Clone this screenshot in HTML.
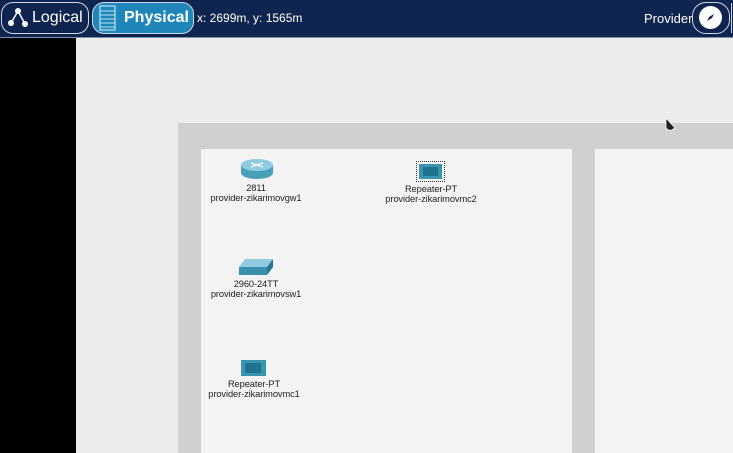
<!DOCTYPE html>
<html><head><style>
body{margin:0;width:733px;height:453px;overflow:hidden;background:#ececec;font-family:"Liberation Sans",sans-serif;position:relative}
.bar{position:absolute;left:0;top:0;width:733px;height:37px;background:#0f2550;border-bottom:1px solid #8090a8}
.tab{position:absolute;top:2px;height:32px;border:1.5px solid #cfd8e4;border-radius:12px;box-sizing:border-box;color:#fff;font-size:16px;line-height:30px}
.lbl{position:absolute;font-size:9.3px;color:#222;text-align:center;width:140px;line-height:10px;letter-spacing:-0.1px}
</style></head><body>
<div class="bar">
 <div class="tab" style="left:1px;width:88px;background:#0f2550">
  <svg width="26" height="26" style="position:absolute;left:3px;top:2px"><path d="M13 6 L6 18 M13 6 L20 19" stroke="#fff" stroke-width="1.5"/><circle cx="13" cy="6" r="3" fill="#fff"/><circle cx="6" cy="18" r="3" fill="#fff"/><circle cx="20" cy="19" r="3" fill="#fff"/></svg>
  <span style="position:absolute;left:30px;top:0">Logical</span></div>
 <div class="tab" style="left:92px;width:102px;background:#1e86b8;font-weight:bold">
  <svg width="20" height="26" style="position:absolute;left:5px;top:2px"><rect x="2" y="1" width="15" height="24" fill="none" stroke="#bfe0f0" stroke-width="1.2"/><path d="M2 6H17M2 10H17M2 14H17M2 18H17M2 22H17" stroke="#bfe0f0"/></svg>
  <span style="position:absolute;left:31px;top:0">Physical</span></div>
 <div style="position:absolute;left:197px;top:11px;color:#fff;font-size:12px">x: 2699m, y: 1565m</div>
 <div style="position:absolute;left:644px;top:11px;color:#fff;font-size:13px">Provider</div>
 <div class="tab" style="left:692px;width:38px;border-radius:14px;background:#0f2550">
  <div style="position:absolute;left:6px;top:3px;width:23px;height:23px;border-radius:50%;background:#fff"></div>
  <svg width="23" height="23" style="position:absolute;left:6px;top:3px"><path d="M15 8 L10 11 L8 15 L13 12 Z" fill="#0f2550"/></svg>
 </div>
 <div style="position:absolute;left:731px;top:3px;width:2px;height:30px;border-left:1.5px solid #cfd8e4"></div>
</div>
<div style="position:absolute;left:0;top:38px;width:76px;height:415px;background:#000"></div>
<div style="position:absolute;left:178px;top:123px;width:555px;height:330px;background:#d0d0d0"></div>
<div style="position:absolute;left:201px;top:149px;width:371px;height:304px;background:#f3f3f3"></div>
<div style="position:absolute;left:595px;top:149px;width:138px;height:304px;background:#f3f3f3"></div>
<svg width="36" height="24" style="position:absolute;left:239px;top:157px"><path d="M2 8 V16 A16 6 0 0 0 34 16 V8" fill="#4a9fb8"/><ellipse cx="18" cy="8" rx="16" ry="6" fill="#8fcbe0"/><path d="M12 6 L24 10 M24 6 L12 10" stroke="#fff" stroke-width="1.2"/></svg>
<div class="lbl" style="left:186px;top:183px">2811<br>provider-zikarimovgw1</div>
<div style="position:absolute;left:416px;top:161px;width:29px;height:21px;border:1px dotted #333;box-sizing:border-box"></div>
<div style="position:absolute;left:419px;top:164px;width:23px;height:15px;background:#3a95b0"></div>
<div style="position:absolute;left:423px;top:167px;width:15px;height:9px;background:#1f7390"></div>
<div class="lbl" style="left:361px;top:184px">Repeater-PT<br>provider-zikarimovmc2</div>
<svg width="38" height="18" style="position:absolute;left:237px;top:258px"><path d="M8 1 H36 L30 9 H2 Z" fill="#8fcbe0"/><path d="M2 9 H30 V17 H2 Z" fill="#3a8fab"/><path d="M30 9 L36 1 V9 L30 17 Z" fill="#2a7390"/></svg>
<div class="lbl" style="left:186px;top:279px">2960-24TT<br>provider-zikarimovsw1</div>
<div style="position:absolute;left:241px;top:360px;width:25px;height:16px;background:#3a95b0"></div>
<div style="position:absolute;left:245px;top:363px;width:16px;height:10px;background:#1f7390"></div>
<div class="lbl" style="left:184px;top:379px">Repeater-PT<br>provider-zikarimovmc1</div>
<svg width="14" height="16" style="position:absolute;left:664px;top:117px"><path d="M2 1 L2 11 Q4 14 8 13 L11 11 Z" fill="#222" stroke="#fff" stroke-width="0.8"/></svg>
</body></html>
